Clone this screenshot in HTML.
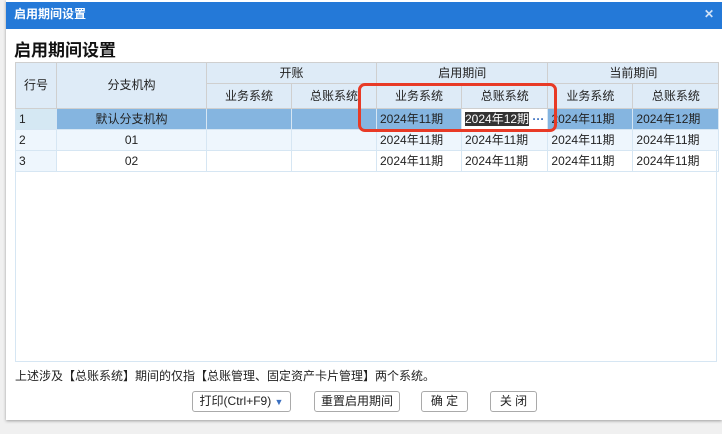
<!DOCTYPE html>
<html><head><meta charset="utf-8"><style>
*{box-sizing:border-box;margin:0;padding:0}
body{width:722px;height:434px;background:#f0f0f0;font-family:"Liberation Sans","Noto Sans CJK SC",sans-serif;font-size:12px;color:#222;position:relative;overflow:hidden}
.dlg{position:absolute;left:6px;top:0;width:716px;height:420px;background:#fff;box-shadow:0 1px 3px rgba(0,0,0,.35)}
.tb{position:absolute;left:6px;top:2px;width:716px;height:27px;background:#2479d8;color:#fff;font-weight:bold;font-size:12px;line-height:24px;padding-left:8px}
.x{position:absolute;right:8px;top:0;color:#d0e2f7;font-size:12px}
h1{position:absolute;left:14px;top:36px;font-size:17px;font-weight:bold;color:#111}
table{position:absolute;left:15px;top:62px;border-collapse:collapse;table-layout:fixed}
td{border:1px solid #d6e6f3;height:21px;padding:0 3px;white-space:nowrap;overflow:hidden;line-height:19px}
.h td{background:#deebf7;border-color:#cfcfcf;text-align:center;font-size:12px}
.sel td{background:#85b5e0}
.r2 td{background:#eef6fd}
.c{text-align:center}
.wrap{position:absolute;left:15px;top:62px;width:702px;height:300px;border:1px solid #d6e6f3}
.red{position:absolute;left:358px;top:83px;width:199px;height:49px;border:3px solid #e83a26;border-radius:7px}
.ed{background:#fff!important}
.ed span{background:#333;color:#fff}
.note{position:absolute;left:15px;top:367px;font-size:12px}
.btn{position:absolute;top:391px;height:21px;border:1px solid #aaa;border-radius:3px;background:#fff;line-height:19px;text-align:center;font-size:12px}
</style></head><body>
<div class="dlg"></div>
<div class="tb">启用期间设置<span class="x">✕</span></div>
<h1>启用期间设置</h1>
<div class="wrap"></div>
<table>
<colgroup><col style="width:41px"><col style="width:150px"><col style="width:85px"><col style="width:85px"><col style="width:85px"><col style="width:85px"><col style="width:85px"><col style="width:86px"></colgroup>
<tr class="h"><td rowspan="2">行号</td><td rowspan="2">分支机构</td><td colspan="2" style="height:19px">开账</td><td colspan="2">启用期间</td><td colspan="2">当前期间</td></tr>
<tr class="h"><td style="height:25px">业务系统</td><td>总账系统</td><td>业务系统</td><td>总账系统</td><td>业务系统</td><td>总账系统</td></tr>
<tr class="sel"><td style="background:#d5e8f3">1</td><td class="c">默认分支机构</td><td></td><td></td><td>2024年11期</td><td class="ed"><span>2024年12期</span> <b style="color:#3a6fc0">···</b></td><td>2024年11期</td><td>2024年12期</td></tr>
<tr class="r2"><td>2</td><td class="c">01</td><td></td><td></td><td>2024年11期</td><td>2024年11期</td><td>2024年11期</td><td>2024年11期</td></tr>
<tr><td style="background:#eef6fd">3</td><td class="c">02</td><td></td><td></td><td>2024年11期</td><td>2024年11期</td><td>2024年11期</td><td>2024年11期</td></tr>
</table>
<div class="red"></div>
<div class="note">上述涉及【总账系统】期间的仅指【总账管理、固定资产卡片管理】两个系统。</div>
<div class="btn" style="left:192px;width:99px">打印(Ctrl+F9) <span style="color:#3a6fc0;font-size:9px">▼</span></div>
<div class="btn" style="left:314px;width:86px">重置启用期间</div>
<div class="btn" style="left:421px;width:47px">确 定</div>
<div class="btn" style="left:490px;width:47px">关 闭</div>
</body></html>
